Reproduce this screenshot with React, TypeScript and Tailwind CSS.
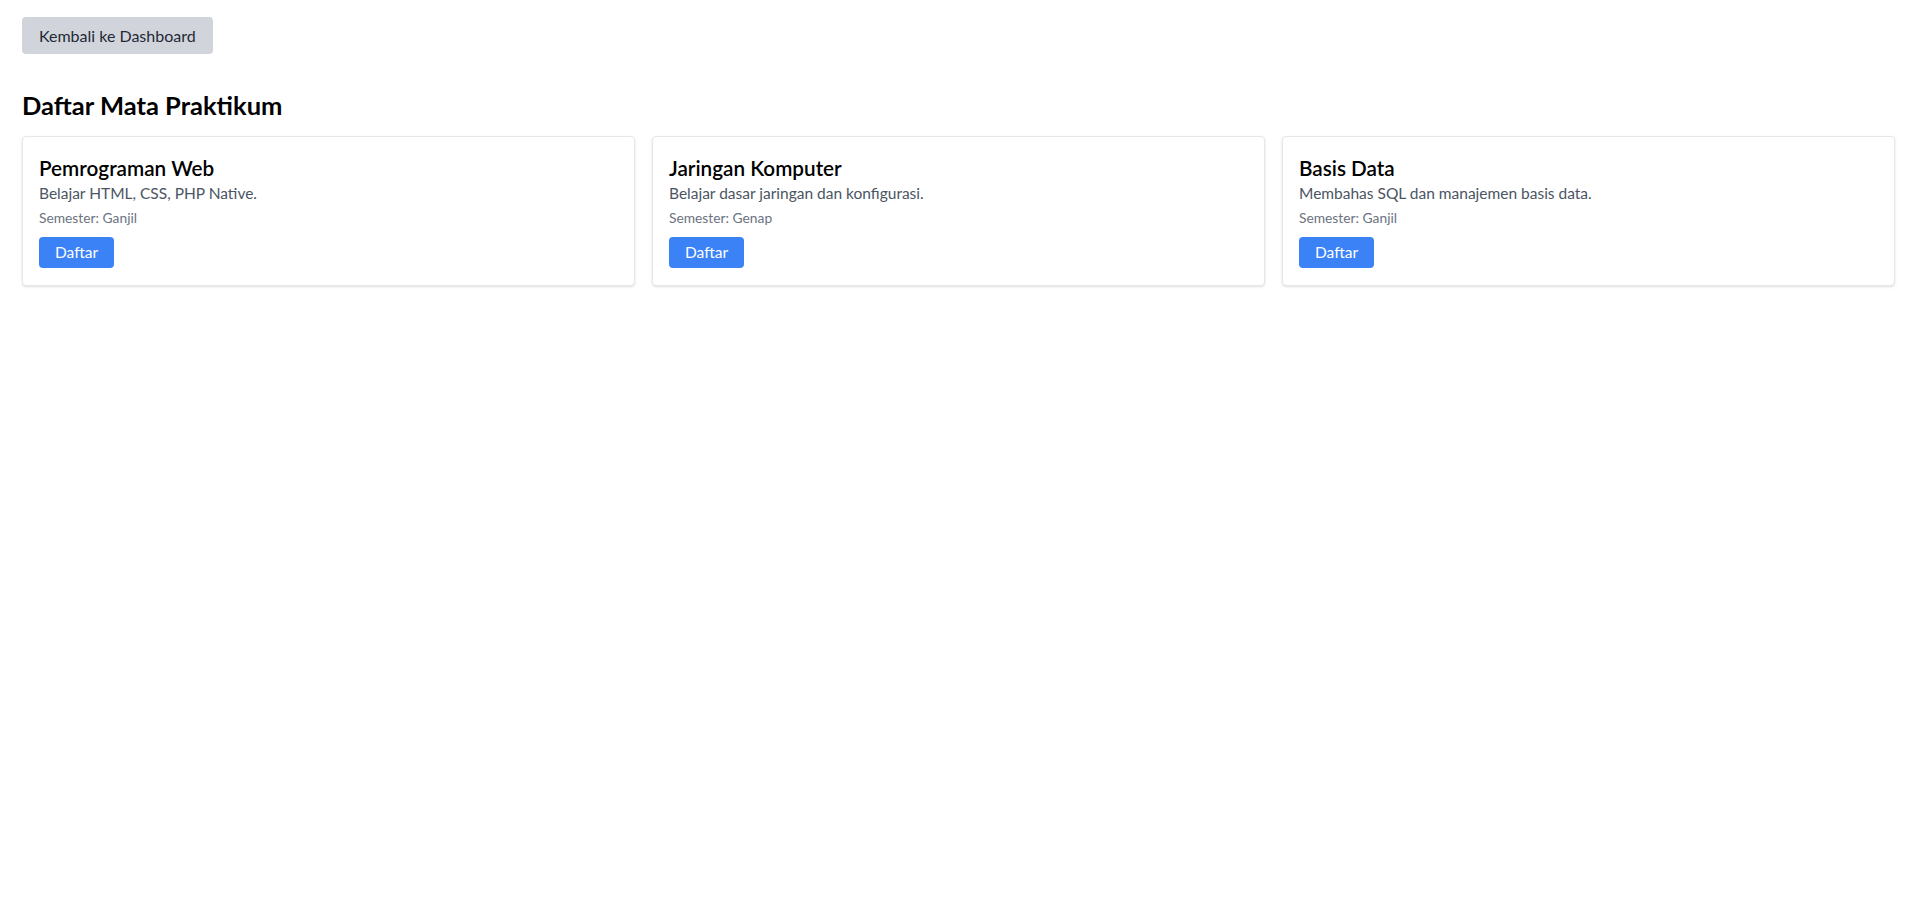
const courses = [
  { name: 'Pemrograman Web', desc: 'Belajar HTML, CSS, PHP Native.', semester: 'Ganjil' },
  { name: 'Jaringan Komputer', desc: 'Belajar dasar jaringan dan konfigurasi.', semester: 'Genap' },
  { name: 'Basis Data', desc: 'Membahas SQL dan manajemen basis data.', semester: 'Ganjil' },
];

export default function App() {
  return (
    <main className="min-h-screen bg-white px-[22px] pt-[17px] font-['Lato',sans-serif]">
      <button className="h-[37px] rounded-[4px] bg-[#d1d5db] px-[17px] text-[16px] text-[#1f2937]">
        Kembali ke Dashboard
      </button>

      <h1 className="mt-[35px] mb-[15px] text-[25.5px] leading-[32px] font-bold text-black">
        Daftar Mata Praktikum
      </h1>

      <div className="grid grid-cols-3 gap-[17px]">
        {courses.map((c) => (
          <div
            key={c.name}
            className="rounded-[4px] border border-[#e5e7eb] bg-white px-[16px] py-[17px] shadow-sm"
          >
            <h2 className="text-[20.7px] leading-[28px] font-semibold text-black">{c.name}</h2>
            <p className="text-[15.5px] leading-[22px] text-[#4b5563]">{c.desc}</p>
            <p className="mt-[5px] text-[13.8px] leading-[18px] text-[#6b7280]">Semester: {c.semester}</p>
            <button className="mt-[10px] h-[31px] rounded-[4px] bg-[#3b82f6] px-[16px] text-[15.5px] text-white">
              Daftar
            </button>
          </div>
        ))}
      </div>
    </main>
  );
}
